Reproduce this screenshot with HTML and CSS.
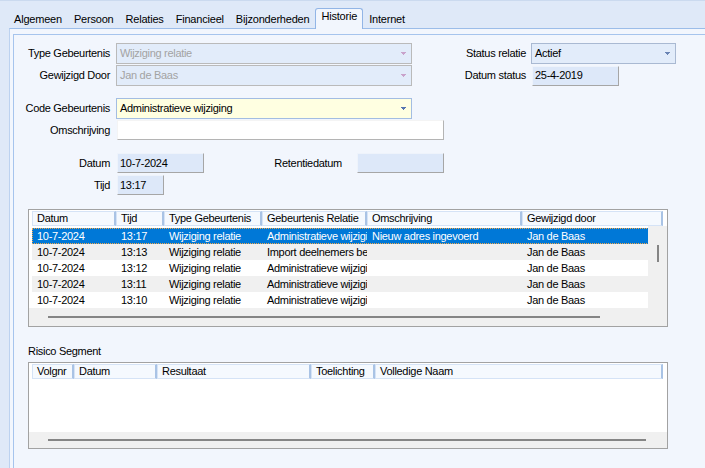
FILE: index.html
```html
<!DOCTYPE html>
<html lang="nl">
<head>
<meta charset="utf-8">
<title>Historie</title>
<link rel="stylesheet" href="styles.css">
</head>
<body>
<div class="window">
  <div class="tabs">
    <span class="tab">Algemeen</span>
    <span class="tab">Persoon</span>
    <span class="tab">Relaties</span>
    <span class="tab">Financieel</span>
    <span class="tab">Bijzonderheden</span>
    <span class="tab active">Historie</span>
    <span class="tab">Internet</span>
  </div>
  <div class="page">
    <div class="panel">
      <div class="form">
        <div class="row r1">
          <span class="lbl">Type Gebeurtenis</span>
          <div class="combo disabled w-wide"><span class="ctext">Wijziging relatie</span><svg class="arrow" width="5" height="4" viewBox="0 0 5 4"><rect x="0" y="0" width="5" height="1"/><rect x="1" y="1" width="3" height="1"/><rect x="2" y="2" width="1" height="1"/></svg></div>
          <span class="lbl rlbl">Status relatie</span>
          <div class="combo status"><span class="ctext">Actief</span><svg class="arrow" width="5" height="4" viewBox="0 0 5 4"><rect x="0" y="0" width="5" height="1"/><rect x="1" y="1" width="3" height="1"/><rect x="2" y="2" width="1" height="1"/></svg></div>
        </div>
        <div class="row r2">
          <span class="lbl">Gewijzigd Door</span>
          <div class="combo disabled w-wide"><span class="ctext">Jan de Baas</span><svg class="arrow" width="5" height="4" viewBox="0 0 5 4"><rect x="0" y="0" width="5" height="1"/><rect x="1" y="1" width="3" height="1"/><rect x="2" y="2" width="1" height="1"/></svg></div>
          <span class="lbl rlbl">Datum status</span>
          <div class="tbox ro w-date shift"><span>25-4-2019</span></div>
        </div>
        <div class="row r3">
          <span class="lbl">Code Gebeurtenis</span>
          <div class="combo code w-wide"><span class="ctext">Administratieve wijziging</span><svg class="arrow" width="5" height="4" viewBox="0 0 5 4"><rect x="0" y="0" width="5" height="1"/><rect x="1" y="1" width="3" height="1"/><rect x="2" y="2" width="1" height="1"/></svg></div>
        </div>
        <div class="row r4">
          <span class="lbl">Omschrijving</span>
          <div class="tbox white w-omschr shift"></div>
        </div>
        <div class="row r5">
          <span class="lbl">Datum</span>
          <div class="tbox ro w-date shift"><span>10-7-2024</span></div>
          <span class="lbl retlbl">Retentiedatum</span>
          <div class="tbox ro w-date"></div>
        </div>
        <div class="row r6">
          <span class="lbl">Tijd</span>
          <div class="tbox ro w-time shift"><span>13:17</span></div>
        </div>
      </div>

      <div class="grid g1">
        <div class="ghead">
          <div class="hc" style="width:84px">Datum</div>
          <div class="hc" style="width:48px">Tijd</div>
          <div class="hc" style="width:98px">Type Gebeurtenis</div>
          <div class="hc" style="width:105px">Gebeurtenis Relatie</div>
          <div class="hc" style="width:155px">Omschrijving</div>
          <div class="hc" style="width:141px">Gewijzigd door</div>
        </div>
        <div class="gbody">
          <div class="rows">
            <div class="gr sel">
              <div class="c c1">10-7-2024</div><div class="c c2">13:17</div><div class="c c3">Wijziging relatie</div><div class="c c4">Administratieve wijziging</div><div class="c c5">Nieuw adres ingevoerd</div><div class="c c6">Jan de Baas</div>
            </div>
            <div class="gr alt">
              <div class="c c1">10-7-2024</div><div class="c c2">13:13</div><div class="c c3">Wijziging relatie</div><div class="c c4">Import deelnemers bestand</div><div class="c c5"></div><div class="c c6">Jan de Baas</div>
            </div>
            <div class="gr">
              <div class="c c1">10-7-2024</div><div class="c c2">13:12</div><div class="c c3">Wijziging relatie</div><div class="c c4">Administratieve wijziging</div><div class="c c5"></div><div class="c c6">Jan de Baas</div>
            </div>
            <div class="gr alt">
              <div class="c c1">10-7-2024</div><div class="c c2">13:11</div><div class="c c3">Wijziging relatie</div><div class="c c4">Administratieve wijziging</div><div class="c c5"></div><div class="c c6">Jan de Baas</div>
            </div>
            <div class="gr">
              <div class="c c1">10-7-2024</div><div class="c c2">13:10</div><div class="c c3">Wijziging relatie</div><div class="c c4">Administratieve wijziging</div><div class="c c5"></div><div class="c c6">Jan de Baas</div>
            </div>
          </div>
          <div class="vscroll"><div class="vthumb"></div></div>
        </div>
        <div class="hscroll"><div class="hthumb" style="width:552px"></div></div>
      </div>

      <div class="section-title">Risico Segment</div>

      <div class="grid g2">
        <div class="ghead">
          <div class="hc" style="width:42px">Volgnr</div>
          <div class="hc" style="width:83px">Datum</div>
          <div class="hc" style="width:154px">Resultaat</div>
          <div class="hc" style="width:64px">Toelichting</div>
          <div class="hc" style="width:288px">Volledige Naam</div>
        </div>
        <div class="gbody2"></div>
        <div class="hscroll"><div class="hthumb" style="width:598px"></div></div>
      </div>
    </div>
  </div>
</div>
</body>
</html>
```
FILE: styles.css
```css
html, body {
  margin: 0;
  padding: 0;
}
body {
  width: 705px;
  height: 468px;
  overflow: hidden;
  font-family: "Liberation Sans", Arial, sans-serif;
  font-size: 11px;
  letter-spacing: -0.3px;
  color: #000;
  background: #dfe9f8;
}
.window {
  height: 468px;
  box-shadow: inset 0 1px 0 #cbdaef;
}

/* tabs */
.tabs {
  display: flex;
  align-items: flex-end;
  height: 28px;
  padding-left: 8px;
  box-sizing: border-box;
}
.tab {
  height: 19px;
  padding: 4px 6px 0;
  box-sizing: border-box;
  line-height: 13px;
  white-space: nowrap;
  letter-spacing: -0.2px;
}
.tab.active {
  height: 21px;
  padding: 1px 5px 0;
  margin-bottom: -1px;
  border: 1px solid #92b5e6;
  border-bottom: none;
  border-radius: 3px 3px 0 0;
  background: #f2f6fd;
  position: relative;
  z-index: 1;
}

/* tab page */
.page {
  margin-left: 9px;
  width: 720px;
  height: 460px;
  box-sizing: border-box;
  border: 1px solid #9cbde9;
  border-left-color: #bcd2f0;
  background: #f2f6fd;
  padding: 5px 0 0 3px;
}
.panel {
  height: 100%;
  box-sizing: border-box;
  border-top: 1px solid #a6c4ed;
  border-left: 1px solid #a6c4ed;
}

/* form */
.form {
  padding-top: 8px;
}
.row {
  display: flex;
  align-items: center;
}
.r2 { margin-top: 1px; }
.r3 { margin-top: 12px; }
.r4 { margin-top: 1px; }
.r5 { margin-top: 13px; }
.r6 { margin-top: 2px; }

.lbl {
  flex: none;
  width: 96px;
  margin-right: 6px;
  text-align: right;
  white-space: nowrap;
  line-height: 13px;
}
.rlbl {
  width: 80px;
  margin-left: 34px;
  margin-right: 5px;
}
.retlbl {
  width: 100px;
  margin-left: 38px;
  margin-right: 15px;
}

.combo {
  flex: none;
  height: 21px;
  box-sizing: border-box;
  display: flex;
  align-items: center;
  justify-content: space-between;
  padding: 0 5px 0 3px;
  border: 1px solid #bababa;
}
.combo .ctext {
  white-space: nowrap;
  line-height: 13px;
}
.combo .arrow {
  flex: none;
  display: block;
}
.w-wide { width: 296px; }
.combo.disabled {
  background: #e2ecfa;
  color: #a3a3a3;
}
.combo.disabled .arrow { fill: #c9a3cb; }
.combo.code {
  background: #ffffe1;
  border-color: #a3bde2;
}
.combo.code .arrow { fill: #5675b0; }
.combo.status {
  width: 145px;
  background: #e2ecfa;
  border-color: #a9b9d2;
}
.combo.status .arrow { fill: #6a84b4; }

.tbox {
  flex: none;
  height: 20px;
  box-sizing: border-box;
  border: 1px solid;
  border-color: #eef3fb #a6a6a6 #a6a6a6 #eef3fb;
  display: flex;
  align-items: center;
  padding-left: 2px;
  line-height: 13px;
}
.tbox.ro { background: #dde8f9; }
.tbox.white {
  background: #fff;
  border-color: #f4f4f4 #b4b4b4 #b4b4b4 #f4f4f4;
}
.shift { margin-left: 1px; }
.w-date { width: 87px; }
.w-time { width: 47px; }
.w-omschr { width: 327px; }

/* grids */
.grid {
  margin-left: 14px;
  width: 640px;
  box-sizing: border-box;
  border: 1px solid #a2a2a2;
  background: #fff;
  display: flex;
  flex-direction: column;
  padding-top: 1px;
}
.g1 {
  margin-top: 14px;
  height: 118px;
}
.g2 {
  margin-top: 4px;
  height: 87px;
}
.ghead {
  display: flex;
  height: 15px;
  margin-left: 3px;
  flex: none;
}
.hc {
  flex: none;
  box-sizing: border-box;
  height: 15px;
  border: 1px solid #d5e3f6;
  border-right: 2px solid #a9c3e5;
  background: #f5f9fe;
  padding-left: 4px;
  line-height: 13px;
  white-space: nowrap;
  overflow: hidden;
}
.gbody {
  display: flex;
  height: 82px;
  flex: none;
}
.rows {
  width: 616px;
  margin-left: 3px;
  padding-top: 2px;
  overflow: hidden;
  flex: none;
}
.gr {
  display: flex;
  height: 16px;
  line-height: 16px;
  width: 631px;
  background: #fff;
}
.gr.alt { background: #f0f0f0; }
.gr.sel {
  background: #0078d7;
  color: #fff;
  outline: 1px dotted #f2a84a;
  outline-offset: -1px;
}
.c {
  flex: none;
  box-sizing: border-box;
  padding-left: 5px;
  white-space: nowrap;
  overflow: hidden;
}
.c1 { width: 84px; }
.c2 { width: 48px; }
.c3 { width: 98px; }
.c4 { width: 105px; }
.c5 { width: 155px; }
.c6 { width: 141px; }

.vscroll {
  flex: 1;
  background: #f0f0f0;
  display: flex;
  justify-content: center;
}
.vthumb {
  width: 2px;
  height: 17px;
  margin-top: 19px;
  background: #858585;
}
.gbody2 {
  height: 53px;
  flex: none;
}
.hscroll {
  flex: 1;
  background: #f0f0f0;
  display: flex;
  align-items: center;
  padding-left: 19px;
}
.hthumb {
  height: 2px;
  background: #858585;
}

.section-title {
  margin: 18px 0 0 14px;
  line-height: 13px;
}
```
